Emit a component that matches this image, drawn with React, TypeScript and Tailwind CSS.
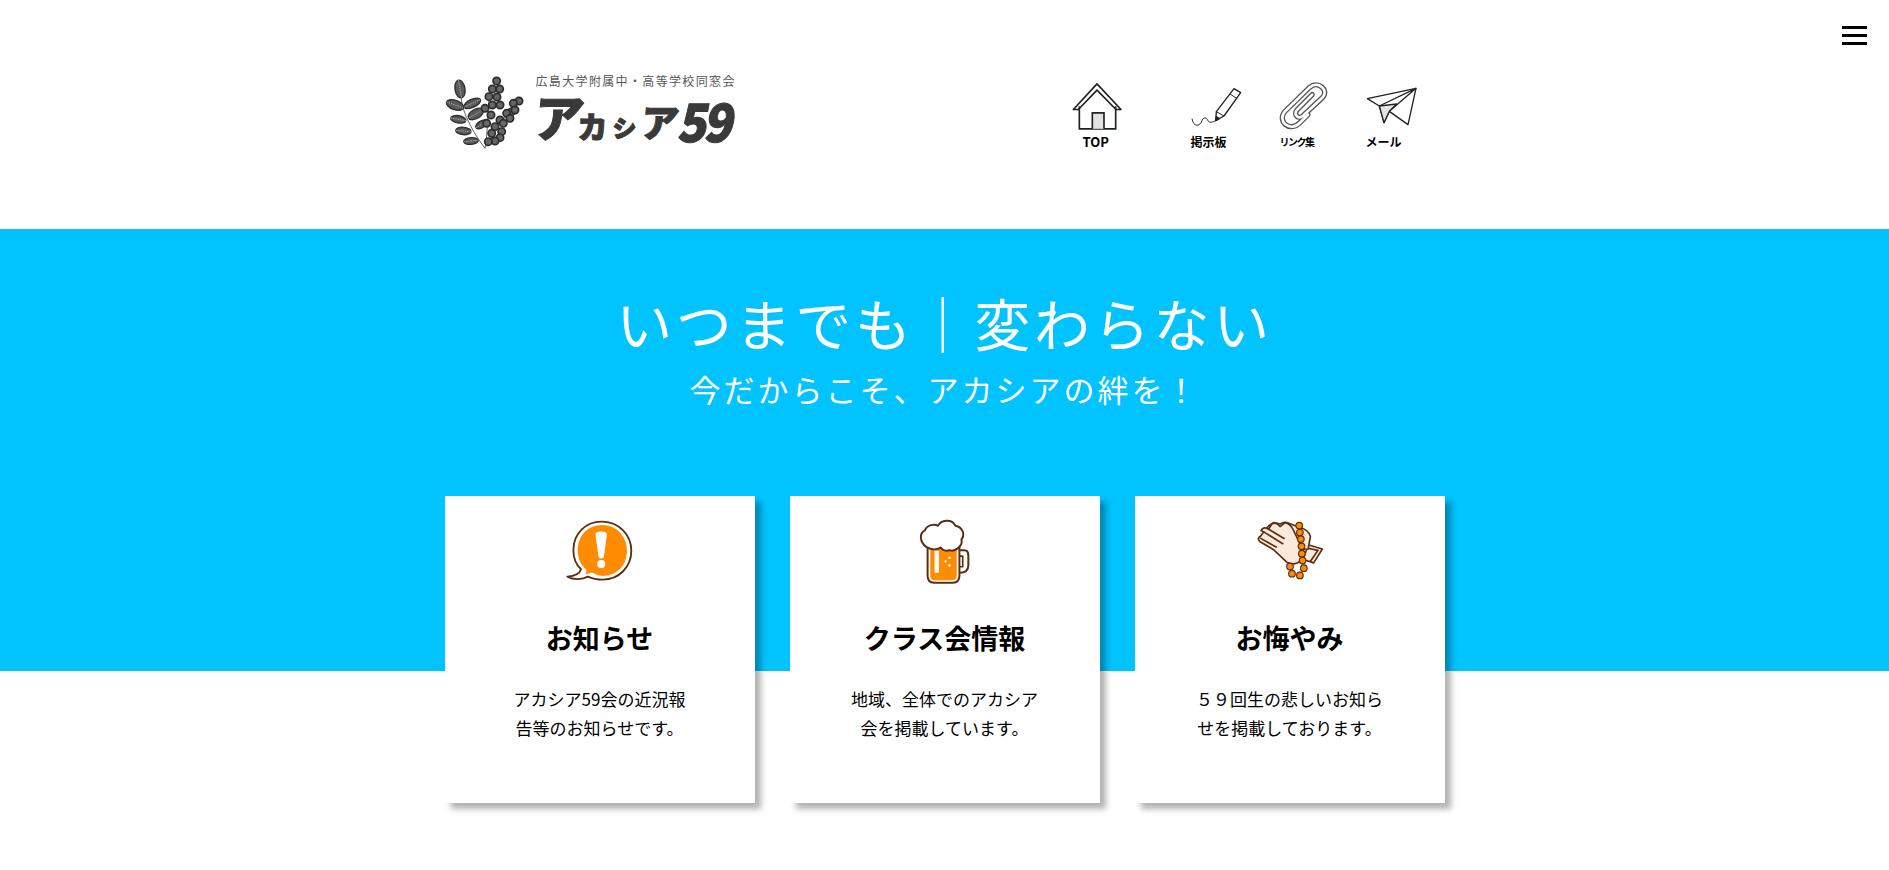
import type { ReactNode } from "react";

const INK = "#222";
const BROWN = "#5a2d14";
const ORANGE = "#ff8c00";

function LogoMark() {
  const leaves = [
    [85, 112, 15, 27, -10],
    [70, 160, 27, 14, 20],
    [122, 155, 27, 12, -25],
    [132, 187, 25, 14, -30],
    [80, 203, 23, 11, 10],
    [150, 218, 20, 10, -30],
    [95, 238, 23, 11, 5],
    [118, 268, 22, 10, -5],
  ];
  const berries = [
    [195, 88], [182, 112], [204, 112], [172, 135], [196, 136], [182, 160], [205, 160], [160, 170],
    [178, 190], [205, 205], [165, 215], [190, 225], [210, 240], [180, 245], [205, 258], [240, 180],
    [262, 148], [245, 155], [225, 185], [250, 175], [215, 215], [235, 200], [190, 268], [170, 270],
  ];
  return (
    <svg viewBox="40 70 240 225" className="h-[75px] w-[80px] shrink-0">
      <path d="M88 135 C92 190 130 250 160 290 M178 100 C165 170 170 240 160 290 M255 155 C215 200 185 240 165 285" fill="none" stroke="#444" strokeWidth="2.5" />
      {leaves.map(([cx, cy, rx, ry, r], i) => (
        <g key={i} transform={`rotate(${r} ${cx} ${cy})`}>
          <ellipse cx={cx} cy={cy} rx={rx} ry={ry} fill="#5a5a5a" stroke="#2e2e2e" strokeWidth="4" />
          <path d={rx > ry ? `M${cx - rx} ${cy} H${cx + rx}` : `M${cx} ${cy - ry} V${cy + ry}`} stroke="#ccc" strokeWidth="2" strokeDasharray="4 3" />
        </g>
      ))}
      {berries.map(([cx, cy], i) => (
        <circle key={i} cx={cx} cy={cy} r="11" fill="#666" stroke="#2b2b2b" strokeWidth="5" />
      ))}
    </svg>
  );
}

function Logo() {
  return (
    <div className="flex items-start gap-[11px] pt-[3px]">
      <LogoMark />
      <div className="-mt-[2px] flex flex-col">
        <p className="text-[12px] leading-[16px] tracking-[1.35px] text-[#555]">広島大学附属中・高等学校同窓会</p>
        <p className="flex h-[54px] items-end font-black leading-none text-[#3a3a3a] [-webkit-text-stroke:1px_#3a3a3a]">
          <span className="-ml-[2px] mb-[3px] -skew-x-6 text-[50px]">ア</span>
          <span className="-ml-[6px] mb-[3px] text-[30px]">カ</span>
          <span className="mb-[4px] ml-[5px] text-[24px]">シ</span>
          <span className="mb-[3px] ml-[4px] -skew-x-6 text-[38px]">ア</span>
          <span className="-mb-[2px] -ml-[3px] origin-bottom -skew-x-12 scale-y-[1.1] text-[48px] tracking-[-3px]">59</span>
        </p>
      </div>
    </div>
  );
}

function HouseIcon() {
  return (
    <svg viewBox="60 35 165 155" className="-ml-[2px] h-[52px] w-[55px]" fill="none" stroke={INK} strokeWidth="5">
      <path d="M70 120 L141 43 L213 120 L198 120 L141 62 L85 120 Z" fill="#fff" strokeLinejoin="round" />
      <path d="M88 110 V178 H197 V110" />
      <path d="M127 178 V130 H162 V178" fill="#e2e2e2" />
    </svg>
  );
}

function PencilIcon() {
  return (
    <svg viewBox="418 48 156 120" className="h-[40px] w-[52px]" fill="none" stroke={INK} strokeWidth="4" strokeLinejoin="round">
      <path d="M497 125 L550 56 L570 68 L520 138 L495 152 Z" fill="#fff" />
      <path d="M538 72 L558 85" strokeWidth="3" />
      <path d="M497 125 L520 138" strokeWidth="3" />
      <path d="M495 152 L497 140 L506 146 Z" fill={INK} />
      <path d="M424 146 C428 172 448 170 454 152 C458 140 468 142 472 152 C476 160 486 156 495 152" strokeWidth="3" />
    </svg>
  );
}

function ClipIcon() {
  const wire = "M788 74 L742 120 C730 135 745 150 760 138 L820 82 C840 60 805 30 780 52 L705 125 C680 155 720 190 750 160 L775 135";
  return (
    <svg viewBox="684 36 158 148" className="h-[49px] w-[52px]" fill="none" strokeLinecap="round">
      <path d={wire} stroke="#555" strokeWidth="16" />
      <path d={wire} stroke="#fff" strokeWidth="8" />
    </svg>
  );
}

function PlaneIcon() {
  return (
    <svg viewBox="948 48 156 120" className="h-[40px] w-[52px]" fill="none" stroke={INK} strokeWidth="4" strokeLinejoin="round">
      <path d="M952 86 L1098 55 L1074 164 L1018 124 L1002 158 L988 108 Z" fill="#fff" />
      <path d="M988 108 L1098 55 L1018 124 Z" fill="#fff" />
      <path d="M988 108 L1002 158 L1018 124 L1040 102 Z" fill="#e4e4e4" />
    </svg>
  );
}

function NavItem({ label, icon, className }: { label: string; icon: ReactNode; className: string }) {
  return (
    <a className={`flex h-[68px] flex-col items-start font-bold ${className}`}>
      <div className="flex h-[52px] items-center">{icon}</div>
      <span className="mt-[4px] leading-[14px] text-black">{label}</span>
    </a>
  );
}

function NoticeIcon() {
  return (
    <svg viewBox="50 55 200 185" className="h-[62px] w-[67px]">
      <path d="M160 60 C110 58 72 95 72 145 C72 170 82 190 95 202 C92 212 78 222 54 224 C75 236 100 232 115 224 C128 230 142 233 160 233 C208 233 245 195 245 147 C245 98 208 62 160 60 Z" fill="#fff" stroke={BROWN} strokeWidth="5.5" strokeLinejoin="round" />
      <path d="M158 70 C112 70 85 105 85 146 C85 170 95 190 110 202 C112 210 110 214 106 218 L128 212 C138 218 148 222 160 222 C202 222 232 190 232 146 C232 105 202 70 158 70 Z" fill={ORANGE} />
      <path d="M138 98 Q138 89 155 89 Q172 89 172 98 L163 166 Q155 174 147 166 Z" fill="#fff" />
      <circle cx="155" cy="186" r="12" fill="#fff" />
    </svg>
  );
}

function BeerIcon() {
  return (
    <svg viewBox="55 35 160 202" className="h-[67px] w-[53px]" fill="none" stroke={BROWN} strokeWidth="6" strokeLinejoin="round">
      <path d="M180 132 H195 Q207 132 207 148 V178 Q207 200 180 200" />
      <path d="M180 150 H190 V182 H180" strokeWidth="5" />
      <path d="M84 120 V210 Q84 230 104 230 H160 Q180 230 180 210 V120 Z" fill="#fff" />
      <path d="M92 128 H172 V210 Q172 223 158 223 H106 Q92 223 92 210 Z" fill={ORANGE} stroke="none" />
      <rect x="105" y="134" width="13" height="66" fill="#fff" stroke="none" />
      <circle cx="150" cy="155" r="4" fill="#fff" stroke="none" />
      <circle cx="138" cy="166" r="3.5" fill="#fff" stroke="none" />
      <circle cx="150" cy="178" r="4" fill="#fff" stroke="none" />
      <path d="M80 122 C60 108 58 80 76 72 C82 55 105 52 115 58 C125 42 155 35 168 58 C190 62 198 85 186 100 C192 120 165 138 150 132 C140 136 128 132 124 124 C110 132 92 130 80 122 Z" fill="#fff" />
    </svg>
  );
}

function HandsIcon() {
  const beads = [
    [178, 57], [180, 78], [183, 98], [185, 120], [186, 142], [188, 163], [192, 186], [180, 208], [156, 203], [150, 181],
  ];
  return (
    <svg viewBox="48 40 204 182" className="-mt-[2px] h-[60px] w-[68px]" fill="none" stroke={BROWN} strokeWidth="5" strokeLinejoin="round" strokeLinecap="round">
      <path d="M205 115 L248 128 L222 170 L190 160 Z" fill="#fbeadb" />
      <path d="M200 125 L235 132 L212 165" />
      <path d="M78 65 Q88 55 100 48 L122 52 Q132 42 152 52 L178 62 Q205 68 212 90 L205 128 L170 130 Z" fill="#fbeadb" />
      <path d="M62 72 Q70 58 85 68 L95 52 Q108 44 120 60 L135 48 Q150 50 160 70 L172 95 L190 135 L180 165 Q165 180 140 168 L100 130 L58 105 Q48 95 62 88 L70 76 Z" fill="#fbeadb" />
      <path d="M85 68 L132 96 M70 76 L128 112 M60 95 L108 122" />
      {beads.map(([cx, cy]) => (
        <circle key={`${cx}-${cy}`} cx={cx} cy={cy} r="10" fill={ORANGE} strokeWidth="3.5" />
      ))}
    </svg>
  );
}

function Card({ title, lines, icon }: { title: string; lines: string[]; icon: ReactNode }) {
  return (
    <div className="flex h-[307px] w-[310px] flex-col items-center bg-white pt-[21px] text-black shadow-[6px_6px_6px_rgba(0,0,0,0.3)]">
      <div className="flex h-[68px] items-center">{icon}</div>
      <h3 className="mt-[35px] text-[27px] font-bold leading-[36px]">{title}</h3>
      <p className="mt-[28px] text-center text-[17px] leading-[29px]">
        {lines[0]}
        <br />
        {lines[1]}
      </p>
    </div>
  );
}

export default function App() {
  return (
    <div className="relative min-h-[870px] overflow-hidden bg-white font-['Noto_Sans_CJK_JP','Noto_Sans',sans-serif]">
      <button className="absolute right-[22px] top-[26px] flex w-[25px] flex-col gap-[5px]" aria-label="menu">
        <span className="h-[3px] bg-black" />
        <span className="h-[3px] bg-black" />
        <span className="h-[3px] bg-black" />
      </button>

      <header className="mx-auto flex h-[229px] w-[1000px] items-start justify-between pt-[72px]">
        <Logo />
        <nav className="mr-[29px] mt-[9px] flex">
          <NavItem label="TOP" icon={<HouseIcon />} className="w-[118px] [&>span]:mt-[2px] [&>span]:ml-[11px] [&>span]:text-[13px]" />
          <NavItem label="掲示板" icon={<PencilIcon />} className="w-[88px] [&>span]:ml-[1px] [&>span]:text-[12px]" />
          <NavItem label="リンク集" icon={<ClipIcon />} className="w-[88px] [&>span]:ml-[2px] [&>span]:text-[10px] [&>span]:tracking-[-1.5px]" />
          <NavItem label="メール" icon={<PlaneIcon />} className="w-[50px] [&>span]:text-[12px]" />
        </nav>
      </header>

      <section className="h-[442px] bg-[#00c3ff] pt-[57px] text-center text-white">
        <h1 className="text-[56px] leading-[72px] tracking-[3.7px]">いつまでも｜変わらない</h1>
        <h2 className="mt-[11px] text-[31px] leading-[40px] tracking-[3px]">今だからこそ、アカシアの絆を！</h2>
        <div className="mx-auto mt-[87px] flex w-[1000px] justify-between">
          <Card title="お知らせ" lines={["アカシア59会の近況報", "告等のお知らせです。"]} icon={<NoticeIcon />} />
          <Card title="クラス会情報" lines={["地域、全体でのアカシア", "会を掲載しています。"]} icon={<BeerIcon />} />
          <Card title="お悔やみ" lines={["５９回生の悲しいお知ら", "せを掲載しております。"]} icon={<HandsIcon />} />
        </div>
      </section>
    </div>
  );
}
